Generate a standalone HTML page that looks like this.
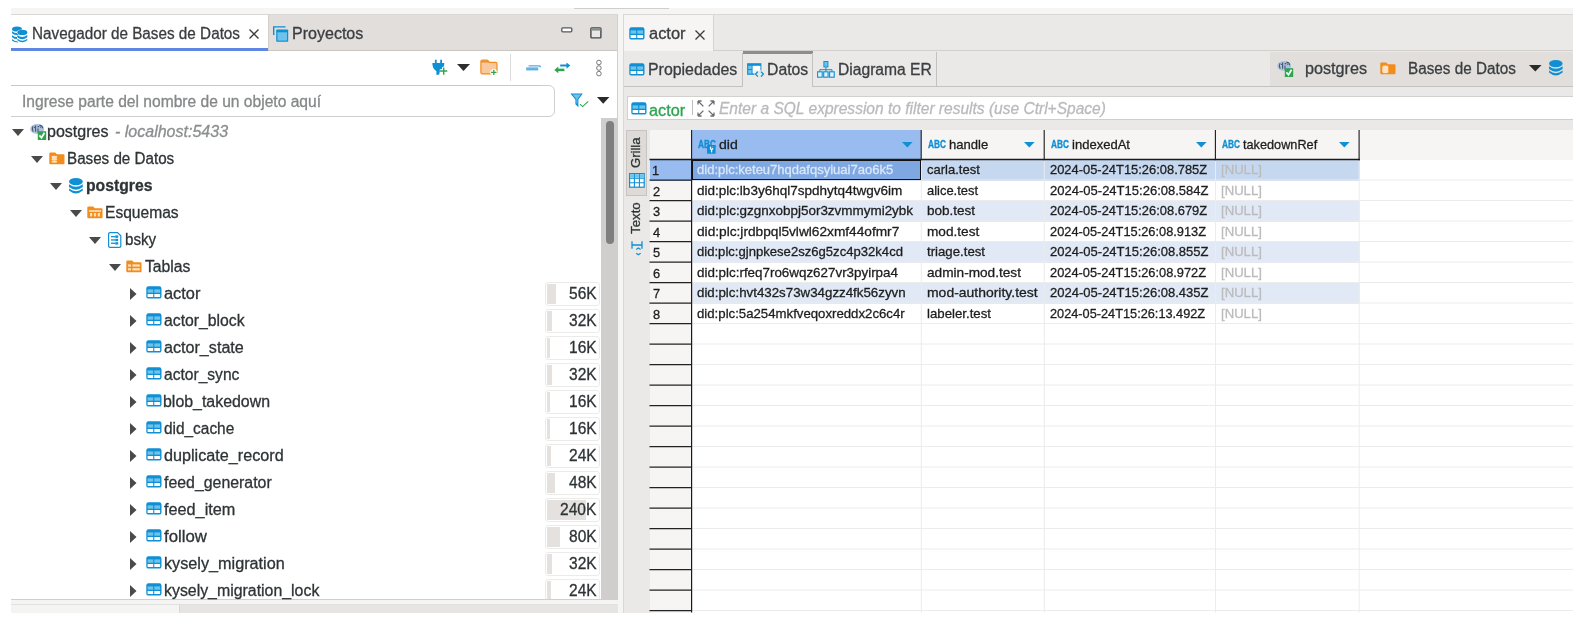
<!DOCTYPE html>
<html lang="es"><head><meta charset="utf-8"><title>DBeaver</title><style>
html,body{margin:0;padding:0;background:#fff}
body{width:1575px;height:624px;position:relative;overflow:hidden;font-family:'Liberation Sans',sans-serif}
#r>div,#r>svg,#r>span{position:absolute}
#r>svg{overflow:visible}
#r{will-change:transform;position:absolute;left:0;top:0;width:1575px;height:624px}
.t{white-space:pre;line-height:1;transform-origin:0 0;-webkit-text-stroke:0.3px currentColor}
.abc{font-size:9px;font-weight:700;color:#0f8fd4;line-height:1;letter-spacing:0.2px;font-family:'Liberation Mono','DejaVu Sans Mono',monospace;transform:scaleX(1.0);transform-origin:0 0}
.vt{font-size:13.5px;color:#2e3436;line-height:1;white-space:pre;transform-origin:0 0;transform:rotate(-90deg) scaleX(0.95)}
</style></head><body><div id="r">
<div style="left:11px;top:8px;width:1562px;height:7px;background:#f5f5f4;"></div>
<div style="left:11px;top:14px;width:1562px;height:1px;background:#d9d6d3;"></div>
<div style="left:11px;top:15px;width:607px;height:35.5px;background:#e1dedb;"></div>
<div style="left:11px;top:50px;width:607px;height:1px;background:#c9c6c3;"></div>
<div style="left:11px;top:15px;width:257px;height:33px;background:#ffffff;"></div>
<div style="left:11px;top:48px;width:257px;height:3px;background:#5f86e3;"></div>
<div style="left:268px;top:15px;width:1px;height:35px;background:#d2cfcc;"></div>
<div style="left:11px;top:51px;width:606px;height:548px;background:#ffffff;"></div>
<div style="left:617px;top:15px;width:1px;height:585px;background:#d2cfcc;"></div>
<div style="left:618px;top:8px;width:4.5px;height:605px;background:#f5f5f4;"></div>
<div style="left:574px;top:8px;width:95px;height:1px;background:#cfcfcf;"></div>
<div style="left:510px;top:54px;width:1px;height:27px;background:#dcdcdc;"></div>
<div style="left:5px;top:84.5px;width:550px;height:32px;border:1px solid #cfcfcf;border-radius:6px;background:#fff;box-sizing:border-box"></div>
<div style="left:11px;top:85px;width:530px;height:1px;background:#c9c9c9;"></div>
<div style="left:5px;top:80px;width:6px;height:40px;background:#ffffff;"></div>
<div style="left:601px;top:117.5px;width:16.5px;height:482px;background:#cfcecd;"></div>
<div style="left:605.5px;top:121px;width:8.5px;height:123px;background:#7f7f7f;border-radius:4.5px"></div>
<div style="left:622.5px;top:15px;width:951px;height:36px;background:#eae9e7;"></div>
<div style="left:623px;top:15px;width:90px;height:35.5px;background:#f6f5f4;"></div>
<div style="left:713px;top:15px;width:1px;height:36px;background:#d5d3d0;"></div>
<div style="left:713px;top:50px;width:860px;height:1px;background:#d2d0cd;"></div>
<div style="left:622.5px;top:51px;width:951px;height:35px;background:#eae9e7;"></div>
<div style="left:1270px;top:52px;width:303px;height:34px;background:#e1dedb;"></div>
<div style="left:622.5px;top:86px;width:951px;height:1px;background:#c4c2bf;"></div>
<div style="left:622.5px;top:87px;width:951px;height:43px;background:#eae9e7;"></div>
<div style="left:742.5px;top:51px;width:70px;height:36px;background:#eae9e7;"></div>
<div style="left:742.5px;top:51px;width:70px;height:2.5px;background:#8b8e8f;"></div>
<div style="left:742px;top:53px;width:1px;height:33.5px;background:#c4c2bf;"></div>
<div style="left:812px;top:53px;width:1px;height:33.5px;background:#c4c2bf;"></div>
<div style="left:935.5px;top:52px;width:1px;height:34px;background:#c4c2bf;"></div>
<div style="left:626.5px;top:96px;width:947px;height:1px;background:#d3d1ce;"></div>
<div style="left:626.5px;top:96px;width:1px;height:24px;background:#d3d1ce;"></div>
<div style="left:627.5px;top:97px;width:946px;height:22px;background:#ffffff;"></div>
<div style="left:626.5px;top:119px;width:947px;height:1px;background:#d0cecb;"></div>
<div style="left:692.3px;top:100px;width:1px;height:15px;background:#bdbdbd;"></div>
<div style="left:622.5px;top:120px;width:951px;height:492.5px;background:#eae9e7;"></div>
<div style="left:622.5px;top:15px;width:1px;height:598px;background:#dad8d5;"></div>
<div style="left:625.5px;top:130px;width:21.5px;height:65.5px;background:#dddad7;border:1px solid #c6c3c0;box-sizing:border-box"></div>
<div style="left:649.5px;top:130px;width:923.5px;height:482.5px;background:#ffffff;"></div>
<div style="left:649.5px;top:130px;width:923.5px;height:29.5px;background:#f6f5f4;"></div>
<div style="left:649.5px;top:130px;width:42.5px;height:482.5px;background:#f6f5f4;"></div>
<div style="left:692px;top:130px;width:229px;height:29.5px;background:#99bcf0;"></div>
<div style="left:692px;top:160.0px;width:667.5px;height:20.5px;background:#c6d8f0;"></div>
<div style="left:649.5px;top:160.0px;width:42.5px;height:20.5px;background:#99bcf0;"></div>
<div style="left:692px;top:201.0px;width:667.5px;height:20.5px;background:#e0e9f5;"></div>
<div style="left:692px;top:242.0px;width:667.5px;height:20.5px;background:#e0e9f5;"></div>
<div style="left:692px;top:283.0px;width:667.5px;height:20.5px;background:#e0e9f5;"></div>
<svg style="left:0;top:0" width="1575" height="613" viewBox="0 0 1575 613"><path d="M692 180.0H1573" stroke="#ececec" stroke-width="1"/><path d="M692 200.5H1573" stroke="#ececec" stroke-width="1"/><path d="M692 221.0H1573" stroke="#ececec" stroke-width="1"/><path d="M692 241.5H1573" stroke="#ececec" stroke-width="1"/><path d="M692 262.0H1573" stroke="#ececec" stroke-width="1"/><path d="M692 282.5H1573" stroke="#ececec" stroke-width="1"/><path d="M692 303.0H1573" stroke="#ececec" stroke-width="1"/><path d="M692 323.5H1573" stroke="#ececec" stroke-width="1"/><path d="M692 344.0H1573" stroke="#ececec" stroke-width="1"/><path d="M692 364.5H1573" stroke="#ececec" stroke-width="1"/><path d="M692 385.0H1573" stroke="#ececec" stroke-width="1"/><path d="M692 405.5H1573" stroke="#ececec" stroke-width="1"/><path d="M692 426.0H1573" stroke="#ececec" stroke-width="1"/><path d="M692 446.5H1573" stroke="#ececec" stroke-width="1"/><path d="M692 467.0H1573" stroke="#ececec" stroke-width="1"/><path d="M692 487.5H1573" stroke="#ececec" stroke-width="1"/><path d="M692 508.0H1573" stroke="#ececec" stroke-width="1"/><path d="M692 528.5H1573" stroke="#ececec" stroke-width="1"/><path d="M692 549.0H1573" stroke="#ececec" stroke-width="1"/><path d="M692 569.5H1573" stroke="#ececec" stroke-width="1"/><path d="M692 590.0H1573" stroke="#ececec" stroke-width="1"/><path d="M692 610.5H1573" stroke="#ececec" stroke-width="1"/><path d="M921.3000000000001 159.5V612.5" stroke="#ececec" stroke-width="1"/><path d="M1044.3 159.5V612.5" stroke="#ececec" stroke-width="1"/><path d="M1215.5 159.5V612.5" stroke="#ececec" stroke-width="1"/><path d="M1359.2 159.5V612.5" stroke="#ececec" stroke-width="1"/><path d="M649.5 159.5H1360" stroke="#1a1a1a" stroke-width="1.4"/><path d="M691.6 130V160.2" stroke="#1a1a1a" stroke-width="1.1"/><path d="M921.2 130V160.2" stroke="#1a1a1a" stroke-width="1.1"/><path d="M1044.1999999999998 130V160.2" stroke="#1a1a1a" stroke-width="1.1"/><path d="M1215.3999999999999 130V160.2" stroke="#1a1a1a" stroke-width="1.1"/><path d="M1359.1 130V160.2" stroke="#1a1a1a" stroke-width="1.1"/><path d="M691.6 159.5V612.5" stroke="#1a1a1a" stroke-width="1.2"/><path d="M649.5 180.0H691.6" stroke="#222" stroke-width="1.25"/><path d="M649.5 200.5H691.6" stroke="#222" stroke-width="1.25"/><path d="M649.5 221.0H691.6" stroke="#222" stroke-width="1.25"/><path d="M649.5 241.5H691.6" stroke="#222" stroke-width="1.25"/><path d="M649.5 262.0H691.6" stroke="#222" stroke-width="1.25"/><path d="M649.5 282.5H691.6" stroke="#222" stroke-width="1.25"/><path d="M649.5 303.0H691.6" stroke="#222" stroke-width="1.25"/><path d="M649.5 323.5H691.6" stroke="#222" stroke-width="1.25"/><path d="M649.5 344.0H691.6" stroke="#222" stroke-width="1.25"/><path d="M649.5 364.5H691.6" stroke="#222" stroke-width="1.25"/><path d="M649.5 385.0H691.6" stroke="#222" stroke-width="1.25"/><path d="M649.5 405.5H691.6" stroke="#222" stroke-width="1.25"/><path d="M649.5 426.0H691.6" stroke="#222" stroke-width="1.25"/><path d="M649.5 446.5H691.6" stroke="#222" stroke-width="1.25"/><path d="M649.5 467.0H691.6" stroke="#222" stroke-width="1.25"/><path d="M649.5 487.5H691.6" stroke="#222" stroke-width="1.25"/><path d="M649.5 508.0H691.6" stroke="#222" stroke-width="1.25"/><path d="M649.5 528.5H691.6" stroke="#222" stroke-width="1.25"/><path d="M649.5 549.0H691.6" stroke="#222" stroke-width="1.25"/><path d="M649.5 569.5H691.6" stroke="#222" stroke-width="1.25"/><path d="M649.5 590.0H691.6" stroke="#222" stroke-width="1.25"/><path d="M649.5 610.5H691.6" stroke="#222" stroke-width="1.25"/></svg>
<div style="left:692px;top:160px;width:229px;height:19.5px;background:#7fa8e3;border:1.5px solid #111;box-sizing:border-box"></div>
<div style="left:0px;top:612.5px;width:1575px;height:12px;background:#ffffff;"></div>
<div style="left:1573px;top:0px;width:2px;height:624px;background:#ffffff;"></div>
<svg style="left:12px;top:25.5px" width="16" height="17" viewBox="0 0 16 17"><ellipse cx="5" cy="3" rx="5" ry="2.6" fill="#0f8fd4"/><path d="M0 5.2Q5 9 10 5.2V7.2Q5 11 0 7.2Z M0 9.2Q5 13 10 9.2V11.2Q5 15 0 11.2Z M0 13Q3 15.5 6 15.5V16.5Q2 16.5 0 14.6Z" fill="#0f8fd4"/><ellipse cx="10.3" cy="6.6" rx="5.6" ry="3.2" fill="#fff"/><ellipse cx="10.3" cy="6.4" rx="5" ry="2.7" fill="#0f8fd4"/><path d="M5 9.2h10.6v6H5z" fill="#fff"/><path d="M5.3 9Q10.3 13 15.3 9V11.2Q10.3 15.2 5.3 11.2Z M5.3 12.8Q10.3 16.8 15.3 12.8V14.2Q10.3 18.2 5.3 14.2Z" fill="#0f8fd4"/></svg>
<svg style="left:249px;top:29.2px" width="10" height="10" viewBox="0 0 10 10"><path d="M0.5 0.5L9.5 9.5M9.5 0.5L0.5 9.5" stroke="#3a3a3a" stroke-width="1.3" fill="none"/></svg>
<svg style="left:273px;top:25.5px" width="16" height="17" viewBox="0 0 16 17"><path d="M0.7 9V0.9H12.5" stroke="#0f8fd4" stroke-width="1.4" fill="none"/><rect x="3.2" y="3.5" width="12" height="12.3" rx="0.8" fill="#0f8fd4"/><rect x="4.4" y="6.3" width="9.6" height="8.3" fill="#6cc4ec"/></svg>
<svg style="left:560.5px;top:26.5px" width="12" height="6" viewBox="0 0 12 6"><rect x="0.8" y="0.8" width="10" height="4" rx="1" fill="#fff" stroke="#55585a" stroke-width="1.3"/></svg>
<svg style="left:589.5px;top:26.5px" width="12" height="12" viewBox="0 0 12 12"><rect x="0.9" y="0.9" width="10" height="10" rx="0.8" fill="#e9e8e6" stroke="#44474a" stroke-width="1.4"/><rect x="1.2" y="1.2" width="9.4" height="2.4" fill="#8a8c8e"/></svg>
<svg style="left:432px;top:59px" width="16" height="16" viewBox="0 0 16 16"><path d="M2.9 0.8h1.8v3.4H2.9zM8.2 0.8h1.8v3.4H8.2z" fill="#0f8fd4"/><path d="M0.4 4.1H12.3Q12.6 8.2 8.4 11.2L7 15.8H4.4V12.2Q0 9.4 0.4 4.1Z" fill="#0f8fd4"/><path d="M11.7 8V15.8M7.8 12H15.6" stroke="#fff" stroke-width="3.4"/><path d="M11.7 8.5V15.8M8 12H15.3" stroke="#2ea44f" stroke-width="1.4"/></svg>
<svg style="left:457.2px;top:63.9px" width="13" height="6.9" viewBox="0 0 13 6.9"><path d="M0 0H13L6.5 6.9Z" fill="#2e2e2e"/></svg>
<svg style="left:479.5px;top:58.5px" width="18" height="16" viewBox="0 0 18 16"><path d="M0.9 2.4Q0.9 1 2.3 1H6.8Q7.6 1 8.2 1.8L9.4 3.4H15.6Q17 3.4 17 4.8V13.6Q17 14.9 15.6 14.9H2.3Q0.9 14.9 0.9 13.6Z" fill="#f9c99d" stroke="#f28c1c" stroke-width="1.2"/><path d="M1.2 1.6H7.6L9 3.6H1.2Z" fill="#f28c1c"/><path d="M13.8 10V16.4M10.4 13.4H17.2" stroke="#fff" stroke-width="3.6"/><path d="M13.8 10.7V16.1M11.1 13.4H16.5" stroke="#2ea44f" stroke-width="1.3"/></svg>
<svg style="left:526px;top:64.5px" width="15" height="6" viewBox="0 0 15 6"><path d="M2.6 0.9H14.2V2.4" stroke="#0f8fd4" stroke-width="0.9" fill="none"/><rect x="0.2" y="2.8" width="12" height="2.2" fill="#9ec4ee"/><path d="M0.2 3H12.2M0.2 4.9H12.2" stroke="#0f8fd4" stroke-width="0.7"/></svg>
<svg style="left:553.5px;top:61.5px" width="17" height="12" viewBox="0 0 17 12"><path d="M6.2 3.5H13" stroke="#0f8fd4" stroke-width="2"/><path d="M12.5 0.4L16.3 3.5L12.5 6.8Z" fill="#0f8fd4"/><path d="M4 7.9H10.4" stroke="#2ea44f" stroke-width="2.5"/><path d="M4.3 4.5L0.3 7.9L4.3 11.2Z" fill="#2ea44f"/></svg>
<svg style="left:595px;top:58.5px" width="8" height="18" viewBox="0 0 8 18"><circle cx="3.9" cy="3.5" r="2.3" fill="none" stroke="#77797b" stroke-width="1"/><circle cx="3.9" cy="9" r="2.3" fill="none" stroke="#77797b" stroke-width="1"/><circle cx="3.9" cy="14.6" r="2.3" fill="none" stroke="#77797b" stroke-width="1"/></svg>
<svg style="left:569.5px;top:93px" width="20" height="15" viewBox="0 0 20 15"><path d="M0.4 0.4H12.8L8.4 6.6V14.2L5.4 11.2V6.6Z" fill="#0f8fd4"/><path d="M2.6 1.6H10.8L7.4 6V11L6.4 10V6Z" fill="#6cc4ec"/><path d="M10 11.2L12.6 13.6L18.2 8.4" fill="none" stroke="#2ea44f" stroke-width="1.1"/></svg>
<svg style="left:596.8px;top:97.2px" width="12.4" height="6.8" viewBox="0 0 12.4 6.8"><path d="M0 0H12.4L6.2 6.8Z" fill="#2a2a2a"/></svg>
<svg style="left:11.5px;top:128.5px" width="12" height="7" viewBox="0 0 12 7"><path d="M0 0H12L6.0 7Z" fill="#4a4a4a"/></svg>
<svg style="left:30px;top:123.80000000000001px" width="17" height="16" viewBox="0 0 17 16"><ellipse cx="7.2" cy="5" rx="7" ry="5" fill="#aec1db"/><path d="M3 2.2Q1.6 5 3.2 7.6M5.6 1.6V7.8M7.6 2.6H9.2M9.4 1.4Q12.4 1 12.6 4.2M8 4.4V8.4" stroke="#34435c" stroke-width="1.1" fill="none" opacity="0.85"/><path d="M4 3.4H5M10 3.2H11.4" stroke="#2c6fc0" stroke-width="1.2"/><rect x="7.8" y="7.2" width="8.4" height="8.8" fill="#2ea44f"/><path d="M9.4 11.4l2.1 2.4 3-5" stroke="#fff" stroke-width="1.7" fill="none"/></svg>
<svg style="left:30.5px;top:155.5px" width="12" height="7" viewBox="0 0 12 7"><path d="M0 0H12L6.0 7Z" fill="#4a4a4a"/></svg>
<svg style="left:48.5px;top:152.20000000000002px" width="16" height="13" viewBox="0 0 16 13"><path d="M0.3 1.6Q0.3 0.4 1.5 0.4H6.2L7.8 2.2H14.5Q15.5 2.2 15.5 3.2V11.3Q15.5 12.3 14.5 12.3H1.3Q0.3 12.3 0.3 11.3Z" fill="#f28c1c"/><ellipse cx="5.3" cy="5" rx="3" ry="1.2" fill="#fde3c3"/><ellipse cx="5.3" cy="7.3" rx="3" ry="1.2" fill="#fde3c3"/><ellipse cx="5.3" cy="9.6" rx="3" ry="1.2" fill="#fde3c3"/></svg>
<svg style="left:50.0px;top:182.5px" width="12" height="7" viewBox="0 0 12 7"><path d="M0 0H12L6.0 7Z" fill="#4a4a4a"/></svg>
<svg style="left:68.5px;top:177.60000000000002px" width="14" height="17" viewBox="0 0 14 17"><ellipse cx="6.9" cy="3.6" rx="6.9" ry="3.6" fill="#0f8fd4"/><path d="M0 6.2 Q6.9 11.5 13.8 6.2 V9 Q6.9 14.3 0 9Z" fill="#0f8fd4"/><path d="M0 10.6 Q6.9 15.9 13.8 10.6 V12.6 Q6.9 18.4 0 12.6Z" fill="#0f8fd4"/></svg>
<svg style="left:69.5px;top:209.5px" width="12" height="7" viewBox="0 0 12 7"><path d="M0 0H12L6.0 7Z" fill="#4a4a4a"/></svg>
<svg style="left:87px;top:206.20000000000002px" width="16" height="13" viewBox="0 0 16 13"><path d="M0.3 1.6Q0.3 0.4 1.5 0.4H6.2L7.8 2.2H14.5Q15.5 2.2 15.5 3.2V11.3Q15.5 12.3 14.5 12.3H1.3Q0.3 12.3 0.3 11.3Z" fill="#f28c1c"/><rect x="2" y="4.2" width="12" height="1.6" fill="#fde3c3"/><rect x="3" y="7" width="2.2" height="3.4" fill="#fde3c3"/><rect x="6.9" y="7" width="2.2" height="3.4" fill="#fde3c3"/><rect x="10.8" y="7" width="2.2" height="3.4" fill="#fde3c3"/></svg>
<svg style="left:89.0px;top:236.5px" width="12" height="7" viewBox="0 0 12 7"><path d="M0 0H12L6.0 7Z" fill="#4a4a4a"/></svg>
<svg style="left:107.6px;top:231.8px" width="14" height="16" viewBox="0 0 14 16"><path d="M2 0.6H9.5L12.8 3.8V14Q12.8 15.4 11.4 15.4H2Q0.6 15.4 0.6 14V2Q0.6 0.6 2 0.6Z" fill="#fff" stroke="#0f8fd4" stroke-width="1.2"/><rect x="3" y="4" width="4" height="1.3" fill="#0f8fd4"/><rect x="3" y="7.3" width="4" height="1.3" fill="#0f8fd4"/><rect x="3" y="10.6" width="4" height="1.3" fill="#0f8fd4"/><rect x="7.2" y="3.4" width="3" height="2.4" fill="#0f8fd4"/><rect x="7.2" y="6.8" width="3" height="2.4" fill="#0f8fd4"/><rect x="7.2" y="10.2" width="3" height="2.4" fill="#0f8fd4"/></svg>
<svg style="left:108.5px;top:263.5px" width="12" height="7" viewBox="0 0 12 7"><path d="M0 0H12L6.0 7Z" fill="#4a4a4a"/></svg>
<svg style="left:126.2px;top:260.2px" width="16" height="13" viewBox="0 0 16 13"><path d="M0.3 1.6Q0.3 0.4 1.5 0.4H6.2L7.8 2.2H14.5Q15.5 2.2 15.5 3.2V11.3Q15.5 12.3 14.5 12.3H1.3Q0.3 12.3 0.3 11.3Z" fill="#f28c1c"/><rect x="2" y="4.4" width="3" height="2.2" fill="#fde3c3"/><rect x="6.4" y="4.4" width="7.4" height="2.2" fill="#fde3c3"/><rect x="2" y="8.2" width="3" height="2.2" fill="#fde3c3"/><rect x="6.4" y="8.2" width="7.4" height="2.2" fill="#fde3c3"/></svg>
<svg style="left:130.4px;top:287.90000000000003px" width="7" height="12" viewBox="0 0 7 12"><path d="M0 0V12L6.5 6.0Z" fill="#4a4a4a"/></svg>
<svg style="left:145.7px;top:286.40000000000003px" width="16" height="13" viewBox="0 0 16 13"><rect x="0.3" y="0.2" width="15.2" height="12.4" rx="2.2" fill="#0f8fd4"/><rect x="1.6" y="3.4" width="5.6" height="3.3" fill="#6cc4ec"/><rect x="8.3" y="3.4" width="5.8" height="3.3" fill="#6cc4ec"/><rect x="1.6" y="8" width="5.6" height="3" fill="#fff"/><rect x="8.3" y="8" width="5.8" height="3" fill="#fff"/></svg>
<div style="left:544.5px;top:281.50px;width:55px;height:24.5px;border:1px solid #ebebea;border-radius:3px;box-sizing:border-box;background:#fff"></div>
<div style="left:547px;top:283.5px;width:9.0px;height:20px;background:#e4e1de;"></div>
<svg style="left:130.4px;top:314.90000000000003px" width="7" height="12" viewBox="0 0 7 12"><path d="M0 0V12L6.5 6.0Z" fill="#4a4a4a"/></svg>
<svg style="left:145.7px;top:313.40000000000003px" width="16" height="13" viewBox="0 0 16 13"><rect x="0.3" y="0.2" width="15.2" height="12.4" rx="2.2" fill="#0f8fd4"/><rect x="1.6" y="3.4" width="5.6" height="3.3" fill="#6cc4ec"/><rect x="8.3" y="3.4" width="5.8" height="3.3" fill="#6cc4ec"/><rect x="1.6" y="8" width="5.6" height="3" fill="#fff"/><rect x="8.3" y="8" width="5.8" height="3" fill="#fff"/></svg>
<div style="left:544.5px;top:308.50px;width:55px;height:24.5px;border:1px solid #ebebea;border-radius:3px;box-sizing:border-box;background:#fff"></div>
<div style="left:547px;top:310.5px;width:5.2px;height:20px;background:#e4e1de;"></div>
<svg style="left:130.4px;top:341.90000000000003px" width="7" height="12" viewBox="0 0 7 12"><path d="M0 0V12L6.5 6.0Z" fill="#4a4a4a"/></svg>
<svg style="left:145.7px;top:340.40000000000003px" width="16" height="13" viewBox="0 0 16 13"><rect x="0.3" y="0.2" width="15.2" height="12.4" rx="2.2" fill="#0f8fd4"/><rect x="1.6" y="3.4" width="5.6" height="3.3" fill="#6cc4ec"/><rect x="8.3" y="3.4" width="5.8" height="3.3" fill="#6cc4ec"/><rect x="1.6" y="8" width="5.6" height="3" fill="#fff"/><rect x="8.3" y="8" width="5.8" height="3" fill="#fff"/></svg>
<div style="left:544.5px;top:335.50px;width:55px;height:24.5px;border:1px solid #ebebea;border-radius:3px;box-sizing:border-box;background:#fff"></div>
<div style="left:547px;top:337.5px;width:2.6px;height:20px;background:#e4e1de;"></div>
<svg style="left:130.4px;top:368.90000000000003px" width="7" height="12" viewBox="0 0 7 12"><path d="M0 0V12L6.5 6.0Z" fill="#4a4a4a"/></svg>
<svg style="left:145.7px;top:367.40000000000003px" width="16" height="13" viewBox="0 0 16 13"><rect x="0.3" y="0.2" width="15.2" height="12.4" rx="2.2" fill="#0f8fd4"/><rect x="1.6" y="3.4" width="5.6" height="3.3" fill="#6cc4ec"/><rect x="8.3" y="3.4" width="5.8" height="3.3" fill="#6cc4ec"/><rect x="1.6" y="8" width="5.6" height="3" fill="#fff"/><rect x="8.3" y="8" width="5.8" height="3" fill="#fff"/></svg>
<div style="left:544.5px;top:362.50px;width:55px;height:24.5px;border:1px solid #ebebea;border-radius:3px;box-sizing:border-box;background:#fff"></div>
<div style="left:547px;top:364.5px;width:5.2px;height:20px;background:#e4e1de;"></div>
<svg style="left:130.4px;top:395.90000000000003px" width="7" height="12" viewBox="0 0 7 12"><path d="M0 0V12L6.5 6.0Z" fill="#4a4a4a"/></svg>
<svg style="left:145.7px;top:394.40000000000003px" width="16" height="13" viewBox="0 0 16 13"><rect x="0.3" y="0.2" width="15.2" height="12.4" rx="2.2" fill="#0f8fd4"/><rect x="1.6" y="3.4" width="5.6" height="3.3" fill="#6cc4ec"/><rect x="8.3" y="3.4" width="5.8" height="3.3" fill="#6cc4ec"/><rect x="1.6" y="8" width="5.6" height="3" fill="#fff"/><rect x="8.3" y="8" width="5.8" height="3" fill="#fff"/></svg>
<div style="left:544.5px;top:389.50px;width:55px;height:24.5px;border:1px solid #ebebea;border-radius:3px;box-sizing:border-box;background:#fff"></div>
<div style="left:547px;top:391.5px;width:2.6px;height:20px;background:#e4e1de;"></div>
<svg style="left:130.4px;top:422.90000000000003px" width="7" height="12" viewBox="0 0 7 12"><path d="M0 0V12L6.5 6.0Z" fill="#4a4a4a"/></svg>
<svg style="left:145.7px;top:421.40000000000003px" width="16" height="13" viewBox="0 0 16 13"><rect x="0.3" y="0.2" width="15.2" height="12.4" rx="2.2" fill="#0f8fd4"/><rect x="1.6" y="3.4" width="5.6" height="3.3" fill="#6cc4ec"/><rect x="8.3" y="3.4" width="5.8" height="3.3" fill="#6cc4ec"/><rect x="1.6" y="8" width="5.6" height="3" fill="#fff"/><rect x="8.3" y="8" width="5.8" height="3" fill="#fff"/></svg>
<div style="left:544.5px;top:416.50px;width:55px;height:24.5px;border:1px solid #ebebea;border-radius:3px;box-sizing:border-box;background:#fff"></div>
<div style="left:547px;top:418.5px;width:2.6px;height:20px;background:#e4e1de;"></div>
<svg style="left:130.4px;top:449.90000000000003px" width="7" height="12" viewBox="0 0 7 12"><path d="M0 0V12L6.5 6.0Z" fill="#4a4a4a"/></svg>
<svg style="left:145.7px;top:448.40000000000003px" width="16" height="13" viewBox="0 0 16 13"><rect x="0.3" y="0.2" width="15.2" height="12.4" rx="2.2" fill="#0f8fd4"/><rect x="1.6" y="3.4" width="5.6" height="3.3" fill="#6cc4ec"/><rect x="8.3" y="3.4" width="5.8" height="3.3" fill="#6cc4ec"/><rect x="1.6" y="8" width="5.6" height="3" fill="#fff"/><rect x="8.3" y="8" width="5.8" height="3" fill="#fff"/></svg>
<div style="left:544.5px;top:443.50px;width:55px;height:24.5px;border:1px solid #ebebea;border-radius:3px;box-sizing:border-box;background:#fff"></div>
<div style="left:547px;top:445.5px;width:3.9px;height:20px;background:#e4e1de;"></div>
<svg style="left:130.4px;top:476.90000000000003px" width="7" height="12" viewBox="0 0 7 12"><path d="M0 0V12L6.5 6.0Z" fill="#4a4a4a"/></svg>
<svg style="left:145.7px;top:475.40000000000003px" width="16" height="13" viewBox="0 0 16 13"><rect x="0.3" y="0.2" width="15.2" height="12.4" rx="2.2" fill="#0f8fd4"/><rect x="1.6" y="3.4" width="5.6" height="3.3" fill="#6cc4ec"/><rect x="8.3" y="3.4" width="5.8" height="3.3" fill="#6cc4ec"/><rect x="1.6" y="8" width="5.6" height="3" fill="#fff"/><rect x="8.3" y="8" width="5.8" height="3" fill="#fff"/></svg>
<div style="left:544.5px;top:470.50px;width:55px;height:24.5px;border:1px solid #ebebea;border-radius:3px;box-sizing:border-box;background:#fff"></div>
<div style="left:547px;top:472.5px;width:7.7px;height:20px;background:#e4e1de;"></div>
<svg style="left:130.4px;top:503.9px" width="7" height="12" viewBox="0 0 7 12"><path d="M0 0V12L6.5 6.0Z" fill="#4a4a4a"/></svg>
<svg style="left:145.7px;top:502.4px" width="16" height="13" viewBox="0 0 16 13"><rect x="0.3" y="0.2" width="15.2" height="12.4" rx="2.2" fill="#0f8fd4"/><rect x="1.6" y="3.4" width="5.6" height="3.3" fill="#6cc4ec"/><rect x="8.3" y="3.4" width="5.8" height="3.3" fill="#6cc4ec"/><rect x="1.6" y="8" width="5.6" height="3" fill="#fff"/><rect x="8.3" y="8" width="5.8" height="3" fill="#fff"/></svg>
<div style="left:544.5px;top:497.50px;width:55px;height:24.5px;border:1px solid #ebebea;border-radius:3px;box-sizing:border-box;background:#fff"></div>
<div style="left:547px;top:499.49999999999994px;width:38.6px;height:20px;background:#e4e1de;"></div>
<svg style="left:130.4px;top:530.9px" width="7" height="12" viewBox="0 0 7 12"><path d="M0 0V12L6.5 6.0Z" fill="#4a4a4a"/></svg>
<svg style="left:145.7px;top:529.4px" width="16" height="13" viewBox="0 0 16 13"><rect x="0.3" y="0.2" width="15.2" height="12.4" rx="2.2" fill="#0f8fd4"/><rect x="1.6" y="3.4" width="5.6" height="3.3" fill="#6cc4ec"/><rect x="8.3" y="3.4" width="5.8" height="3.3" fill="#6cc4ec"/><rect x="1.6" y="8" width="5.6" height="3" fill="#fff"/><rect x="8.3" y="8" width="5.8" height="3" fill="#fff"/></svg>
<div style="left:544.5px;top:524.50px;width:55px;height:24.5px;border:1px solid #ebebea;border-radius:3px;box-sizing:border-box;background:#fff"></div>
<div style="left:547px;top:526.5px;width:12.9px;height:20px;background:#e4e1de;"></div>
<svg style="left:130.4px;top:557.9px" width="7" height="12" viewBox="0 0 7 12"><path d="M0 0V12L6.5 6.0Z" fill="#4a4a4a"/></svg>
<svg style="left:145.7px;top:556.4px" width="16" height="13" viewBox="0 0 16 13"><rect x="0.3" y="0.2" width="15.2" height="12.4" rx="2.2" fill="#0f8fd4"/><rect x="1.6" y="3.4" width="5.6" height="3.3" fill="#6cc4ec"/><rect x="8.3" y="3.4" width="5.8" height="3.3" fill="#6cc4ec"/><rect x="1.6" y="8" width="5.6" height="3" fill="#fff"/><rect x="8.3" y="8" width="5.8" height="3" fill="#fff"/></svg>
<div style="left:544.5px;top:551.50px;width:55px;height:24.5px;border:1px solid #ebebea;border-radius:3px;box-sizing:border-box;background:#fff"></div>
<div style="left:547px;top:553.5px;width:5.2px;height:20px;background:#e4e1de;"></div>
<svg style="left:130.4px;top:584.9px" width="7" height="12" viewBox="0 0 7 12"><path d="M0 0V12L6.5 6.0Z" fill="#4a4a4a"/></svg>
<svg style="left:145.7px;top:583.4px" width="16" height="13" viewBox="0 0 16 13"><rect x="0.3" y="0.2" width="15.2" height="12.4" rx="2.2" fill="#0f8fd4"/><rect x="1.6" y="3.4" width="5.6" height="3.3" fill="#6cc4ec"/><rect x="8.3" y="3.4" width="5.8" height="3.3" fill="#6cc4ec"/><rect x="1.6" y="8" width="5.6" height="3" fill="#fff"/><rect x="8.3" y="8" width="5.8" height="3" fill="#fff"/></svg>
<div style="left:544.5px;top:578.50px;width:55px;height:24.5px;border:1px solid #ebebea;border-radius:3px;box-sizing:border-box;background:#fff"></div>
<div style="left:547px;top:580.5px;width:3.9px;height:20px;background:#e4e1de;"></div>
<div style="left:11px;top:599.5px;width:607px;height:5px;background:#f4f4f3;"></div>
<div style="left:11px;top:599px;width:607px;height:1px;background:#cfcfcf;"></div>
<div style="left:11px;top:604.5px;width:607px;height:8.2px;background:#e7e5e3;"></div>
<div style="left:11px;top:604.5px;width:168.5px;height:8.2px;background:#f4f4f3;"></div>
<div style="left:179px;top:604.5px;width:1px;height:8.2px;background:#d9d7d4;"></div>
<div style="left:11px;top:604px;width:607px;height:1px;background:#e2e1df;"></div>
<svg style="left:628.5px;top:27px" width="16" height="13" viewBox="0 0 16 13"><rect x="0.3" y="0.2" width="15.2" height="12.4" rx="2.2" fill="#0f8fd4"/><rect x="1.6" y="3.4" width="5.6" height="3.3" fill="#6cc4ec"/><rect x="8.3" y="3.4" width="5.8" height="3.3" fill="#6cc4ec"/><rect x="1.6" y="8" width="5.6" height="3" fill="#fff"/><rect x="8.3" y="8" width="5.8" height="3" fill="#fff"/></svg>
<svg style="left:694.5px;top:29.5px" width="10" height="10" viewBox="0 0 10 10"><path d="M0.5 0.5L9.5 9.5M9.5 0.5L0.5 9.5" stroke="#3a3a3a" stroke-width="1.3" fill="none"/></svg>
<svg style="left:628.5px;top:62.8px" width="16" height="13" viewBox="0 0 16 13"><rect x="0.3" y="0.2" width="15.2" height="12.4" rx="2.2" fill="#0f8fd4"/><rect x="1.6" y="3.4" width="5.6" height="3.3" fill="#6cc4ec"/><rect x="8.3" y="3.4" width="5.8" height="3.3" fill="#6cc4ec"/><rect x="1.6" y="8" width="5.6" height="3" fill="#fff"/><rect x="8.3" y="8" width="5.8" height="3" fill="#fff"/></svg>
<svg style="left:747px;top:63px" width="17" height="15" viewBox="0 0 17 15"><rect x="0.1" y="0.2" width="14.3" height="11.6" fill="#0f8fd4"/><rect x="5.6" y="2.8" width="7.8" height="7.6" fill="#fff"/><rect x="1.2" y="2.8" width="3.4" height="3.2" fill="#6cc4ec"/><rect x="1.2" y="7" width="3.4" height="3.6" fill="#6cc4ec"/><path d="M7.4 7.4h9.6v7.6H7.4z" fill="#eae9e7"/><path d="M10.9 8.6L8.6 11.1L10.9 13.6M14 8.6L16.3 11.1L14 13.6" fill="none" stroke="#0f8fd4" stroke-width="1.4"/></svg>
<svg style="left:817px;top:61px" width="18" height="17" viewBox="0 0 18 17"><rect x="6.9" y="0.5" width="4" height="5.4" fill="#6cc4ec" stroke="#0f8fd4" stroke-width="1"/><path d="M8.9 6V9M2.8 11V8.7H15V11M8.9 8.7V11" fill="none" stroke="#0f8fd4" stroke-width="1"/><rect x="0.6" y="10.8" width="4.6" height="5.4" fill="#e4f2fb" stroke="#0f8fd4" stroke-width="1.1"/><rect x="6.7" y="10.8" width="4.4" height="5.4" fill="#e4f2fb" stroke="#0f8fd4" stroke-width="1.1"/><rect x="12.6" y="10.8" width="4.6" height="5.4" fill="#e4f2fb" stroke="#0f8fd4" stroke-width="1.1"/></svg>
<svg style="left:1277px;top:61px" width="17" height="16" viewBox="0 0 17 16"><ellipse cx="7.2" cy="5" rx="7" ry="5" fill="#aec1db"/><path d="M3 2.2Q1.6 5 3.2 7.6M5.6 1.6V7.8M7.6 2.6H9.2M9.4 1.4Q12.4 1 12.6 4.2M8 4.4V8.4" stroke="#34435c" stroke-width="1.1" fill="none" opacity="0.85"/><path d="M4 3.4H5M10 3.2H11.4" stroke="#2c6fc0" stroke-width="1.2"/><rect x="7.8" y="7.2" width="8.4" height="8.8" fill="#2ea44f"/><path d="M9.4 11.4l2.1 2.4 3-5" stroke="#fff" stroke-width="1.7" fill="none"/></svg>
<svg style="left:1380px;top:62px" width="16" height="13" viewBox="0 0 16 13"><path d="M0.3 1.6Q0.3 0.4 1.5 0.4H6.2L7.8 2.2H14.5Q15.5 2.2 15.5 3.2V11.3Q15.5 12.3 14.5 12.3H1.3Q0.3 12.3 0.3 11.3Z" fill="#f28c1c"/><ellipse cx="5.3" cy="5" rx="3" ry="1.4" fill="#fde3c3"/><rect x="2.3" y="5" width="6" height="5" fill="#fde3c3"/><ellipse cx="5.3" cy="10" rx="3" ry="1.2" fill="#fde3c3"/></svg>
<svg style="left:1529px;top:65px" width="12.6" height="6.6" viewBox="0 0 12.6 6.6"><path d="M0 0H12.6L6.3 6.6Z" fill="#2a2a2a"/></svg>
<svg style="left:1548.6px;top:60.4px" width="14" height="17" viewBox="0 0 14 17"><ellipse cx="6.8" cy="3.6" rx="6.8" ry="3.6" fill="#0f8fd4"/><path d="M0 6.2 Q6.8 11.5 13.6 6.2 V9 Q6.8 14.3 0 9Z" fill="#0f8fd4"/><path d="M0 10.6 Q6.8 15.9 13.6 10.6 V12.6 Q6.8 18.4 0 12.6Z" fill="#0f8fd4"/></svg>
<svg style="left:630.6px;top:101.6px" width="16" height="13" viewBox="0 0 16 13"><rect x="0.3" y="0.2" width="15.2" height="12.4" rx="2.2" fill="#0f8fd4"/><rect x="1.6" y="3.4" width="5.6" height="3.3" fill="#6cc4ec"/><rect x="8.3" y="3.4" width="5.8" height="3.3" fill="#6cc4ec"/><rect x="1.6" y="8" width="5.6" height="3" fill="#fff"/><rect x="8.3" y="8" width="5.8" height="3" fill="#fff"/></svg>
<svg style="left:697px;top:99.5px" width="18" height="17" viewBox="0 0 18 17"><path d="M1 1L6.4 6.4M1 1H4.6M1 1V4.6 M17 1L11.6 6.4M17 1H13.4M17 1V4.6 M1 16L6.4 10.6M1 16H4.6M1 16V12.4 M17 16L11.6 10.6M17 16H13.4M17 16V12.4" stroke="#6a6d70" stroke-width="1.3" fill="none"/></svg>
<svg style="left:707.4px;top:145px" width="9" height="9" viewBox="0 0 9 9"><rect x="0" y="0" width="8.6" height="8.7" rx="0.6" fill="#0f8fd4"/><circle cx="4.6" cy="3" r="1.9" fill="#fff"/><circle cx="4.6" cy="3" r="0.7" fill="#0f8fd4"/><path d="M4.6 4.6V7.4" stroke="#fff" stroke-width="1.3"/></svg>
<svg style="left:901.5px;top:141.5px" width="11" height="6" viewBox="0 0 11 6"><path d="M0 0H10.6L5.3 5.6Z" fill="#0f8fd4"/></svg>
<svg style="left:1024px;top:141.5px" width="11" height="6" viewBox="0 0 11 6"><path d="M0 0H10.6L5.3 5.6Z" fill="#0f8fd4"/></svg>
<svg style="left:1195.5px;top:141.5px" width="11" height="6" viewBox="0 0 11 6"><path d="M0 0H10.6L5.3 5.6Z" fill="#0f8fd4"/></svg>
<svg style="left:1338.5px;top:141.5px" width="11" height="6" viewBox="0 0 11 6"><path d="M0 0H10.6L5.3 5.6Z" fill="#0f8fd4"/></svg>
<svg style="left:628.5px;top:172.8px" width="16" height="15" viewBox="0 0 16 15"><rect x="0.6" y="0.6" width="14.6" height="13.6" fill="#fff" stroke="#0f8fd4" stroke-width="1.2"/><path d="M5.4 0.6V14.2M10.4 0.6V14.2M0.6 5.2H15.2M0.6 9.8H15.2" stroke="#0f8fd4" stroke-width="1.1"/><rect x="1.2" y="1.2" width="3.8" height="3.6" fill="#6cc4ec"/><rect x="5.9" y="1.2" width="4" height="3.6" fill="#6cc4ec"/><rect x="10.9" y="1.2" width="3.8" height="3.6" fill="#6cc4ec"/></svg>
<svg style="left:630.5px;top:240px" width="12" height="17" viewBox="0 0 12 17"><path d="M1 1.2V8.8M11 1.2V8.8M1 5H11" stroke="#0f8fd4" stroke-width="1.3" fill="none"/><path d="M5.2 9.6L7.4 8L9.6 9.6M5.2 13.2L7.4 14.8L9.6 13.2" stroke="#0f8fd4" stroke-width="1.2" fill="none"/></svg>
<span class="t" style="left:47.47px;top:124.16px;font-size:16px;color:#2e3436;transform:scaleX(1.0022)">postgres</span>
<span class="t" style="left:66.65px;top:151.16px;font-size:16px;color:#2e3436;transform:scaleX(0.9490)">Bases de Datos</span>
<span class="t" style="left:86.26px;top:178.16px;font-size:16px;color:#2e3436;transform:scaleX(0.9823);font-weight:700">postgres</span>
<span class="t" style="left:105.42px;top:205.16px;font-size:16px;color:#2e3436;transform:scaleX(0.9742)">Esquemas</span>
<span class="t" style="left:125.12px;top:232.16px;font-size:16px;color:#2e3436;transform:scaleX(0.9484)">bsky</span>
<span class="t" style="left:145.15px;top:259.16px;font-size:16px;color:#2e3436;transform:scaleX(0.9821)">Tablas</span>
<span class="t" style="left:115.38px;top:124.16px;font-size:16px;color:#8b8e8f;transform:scaleX(1.0008);font-style:italic">- localhost:5433</span>
<span class="t" style="left:163.81px;top:286.16px;font-size:16px;color:#2e3436;transform:scaleX(1.0222)">actor</span>
<span class="t" style="left:568.76px;top:286.16px;font-size:16px;color:#2e3436;transform:scaleX(0.9700)">56K</span>
<span class="t" style="left:163.83px;top:313.16px;font-size:16px;color:#2e3436;transform:scaleX(0.9856)">actor_block</span>
<span class="t" style="left:568.76px;top:313.16px;font-size:16px;color:#2e3436;transform:scaleX(0.9700)">32K</span>
<span class="t" style="left:163.81px;top:340.16px;font-size:16px;color:#2e3436;transform:scaleX(1.0082)">actor_state</span>
<span class="t" style="left:568.76px;top:340.16px;font-size:16px;color:#2e3436;transform:scaleX(0.9700)">16K</span>
<span class="t" style="left:163.84px;top:367.16px;font-size:16px;color:#2e3436;transform:scaleX(0.9741)">actor_sync</span>
<span class="t" style="left:568.76px;top:367.16px;font-size:16px;color:#2e3436;transform:scaleX(0.9700)">32K</span>
<span class="t" style="left:163.47px;top:394.16px;font-size:16px;color:#2e3436;transform:scaleX(0.9946)">blob_takedown</span>
<span class="t" style="left:568.76px;top:394.16px;font-size:16px;color:#2e3436;transform:scaleX(0.9700)">16K</span>
<span class="t" style="left:163.85px;top:421.16px;font-size:16px;color:#2e3436;transform:scaleX(0.9627)">did_cache</span>
<span class="t" style="left:568.76px;top:421.16px;font-size:16px;color:#2e3436;transform:scaleX(0.9700)">16K</span>
<span class="t" style="left:163.82px;top:448.16px;font-size:16px;color:#2e3436;transform:scaleX(1.0121)">duplicate_record</span>
<span class="t" style="left:568.76px;top:448.16px;font-size:16px;color:#2e3436;transform:scaleX(0.9700)">24K</span>
<span class="t" style="left:164.28px;top:475.16px;font-size:16px;color:#2e3436;transform:scaleX(0.9922)">feed_generator</span>
<span class="t" style="left:568.76px;top:475.16px;font-size:16px;color:#2e3436;transform:scaleX(0.9700)">48K</span>
<span class="t" style="left:164.27px;top:502.16px;font-size:16px;color:#2e3436;transform:scaleX(1.0147)">feed_item</span>
<span class="t" style="left:560.12px;top:502.16px;font-size:16px;color:#2e3436;transform:scaleX(0.9700)">240K</span>
<span class="t" style="left:164.26px;top:529.16px;font-size:16px;color:#2e3436;transform:scaleX(1.0487)">follow</span>
<span class="t" style="left:568.76px;top:529.16px;font-size:16px;color:#2e3436;transform:scaleX(0.9700)">80K</span>
<span class="t" style="left:163.91px;top:556.16px;font-size:16px;color:#2e3436;transform:scaleX(1.0133)">kysely_migration</span>
<span class="t" style="left:568.76px;top:556.16px;font-size:16px;color:#2e3436;transform:scaleX(0.9700)">32K</span>
<span class="t" style="left:163.93px;top:583.16px;font-size:16px;color:#2e3436;transform:scaleX(0.9925)">kysely_migration_lock</span>
<span class="t" style="left:568.76px;top:583.16px;font-size:16px;color:#2e3436;transform:scaleX(0.9700)">24K</span>
<span class="t" style="left:698.19px;top:140.34px;font-size:10px;color:#0f8fd4;transform:scaleX(0.8322);font-weight:700">ABC</span>
<span class="t" style="left:927.79px;top:140.34px;font-size:10px;color:#0f8fd4;transform:scaleX(0.8322);font-weight:700">ABC</span>
<span class="t" style="left:1050.79px;top:140.34px;font-size:10px;color:#0f8fd4;transform:scaleX(0.8322);font-weight:700">ABC</span>
<span class="t" style="left:1222.19px;top:140.34px;font-size:10px;color:#0f8fd4;transform:scaleX(0.8322);font-weight:700">ABC</span>
<span class="t" style="left:719.31px;top:138.47px;font-size:13.5px;color:#1d1d1d;transform:scaleX(1.0435)">did</span>
<span class="t" style="left:948.69px;top:138.47px;font-size:13.5px;color:#1d1d1d;transform:scaleX(0.9690)">handle</span>
<span class="t" style="left:1071.63px;top:138.47px;font-size:13.5px;color:#1d1d1d;transform:scaleX(0.9654)">indexedAt</span>
<span class="t" style="left:1243.31px;top:138.47px;font-size:13.5px;color:#1d1d1d;transform:scaleX(0.9411)">takedownRef</span>
<span class="t" style="left:628.57px;top:167.66px;font-size:13.5px;color:#2e3436;transform:rotate(-90deg) scaleX(0.9696)">Grilla</span>
<span class="t" style="left:628.57px;top:234.30px;font-size:13.5px;color:#2e3436;transform:rotate(-90deg) scaleX(0.9837)">Texto</span>
<span class="t" style="left:652.32px;top:164.27px;font-size:13.5px;color:#1d1d1d;transform:scaleX(0.9500)">1</span>
<span class="t" style="left:697.45px;top:163.17px;font-size:13.5px;color:#dbe7f8;transform:scaleX(0.9645)">did:plc:keteu7hqdafqsyiuai7ao6k5</span>
<span class="t" style="left:927.05px;top:163.17px;font-size:13.5px;color:#1d1d1d;transform:scaleX(0.9629)">carla.test</span>
<span class="t" style="left:1049.75px;top:163.17px;font-size:13.5px;color:#1d1d1d;transform:scaleX(0.9561)">2024-05-24T15:26:08.785Z</span>
<span class="t" style="left:1221.26px;top:163.17px;font-size:13.5px;color:#bbbbbb;transform:scaleX(0.9724)">[NULL]</span>
<span class="t" style="left:652.65px;top:184.77px;font-size:13.5px;color:#1d1d1d;transform:scaleX(0.9500)">2</span>
<span class="t" style="left:697.43px;top:183.67px;font-size:13.5px;color:#1d1d1d;transform:scaleX(1.0019)">did:plc:lb3y6hql7spdhytq4twgv6im</span>
<span class="t" style="left:927.05px;top:183.67px;font-size:13.5px;color:#1d1d1d;transform:scaleX(0.9580)">alice.test</span>
<span class="t" style="left:1049.75px;top:183.67px;font-size:13.5px;color:#1d1d1d;transform:scaleX(0.9646)">2024-05-24T15:26:08.584Z</span>
<span class="t" style="left:1221.26px;top:183.67px;font-size:13.5px;color:#bbbbbb;transform:scaleX(0.9724)">[NULL]</span>
<span class="t" style="left:652.81px;top:205.27px;font-size:13.5px;color:#1d1d1d;transform:scaleX(0.9500)">3</span>
<span class="t" style="left:697.44px;top:204.17px;font-size:13.5px;color:#1d1d1d;transform:scaleX(0.9963)">did:plc:gzgnxobpj5or3zvmmymi2ybk</span>
<span class="t" style="left:926.73px;top:204.17px;font-size:13.5px;color:#1d1d1d;transform:scaleX(1.0005)">bob.test</span>
<span class="t" style="left:1049.75px;top:204.17px;font-size:13.5px;color:#1d1d1d;transform:scaleX(0.9561)">2024-05-24T15:26:08.679Z</span>
<span class="t" style="left:1221.26px;top:204.17px;font-size:13.5px;color:#bbbbbb;transform:scaleX(0.9724)">[NULL]</span>
<span class="t" style="left:653.01px;top:225.77px;font-size:13.5px;color:#1d1d1d;transform:scaleX(0.9500)">4</span>
<span class="t" style="left:697.43px;top:224.67px;font-size:13.5px;color:#1d1d1d;transform:scaleX(1.0134)">did:plc:jrdbpql5vlwl62xmf44ofmr7</span>
<span class="t" style="left:926.69px;top:224.67px;font-size:13.5px;color:#1d1d1d;transform:scaleX(1.0101)">mod.test</span>
<span class="t" style="left:1049.76px;top:224.67px;font-size:13.5px;color:#1d1d1d;transform:scaleX(0.9493)">2024-05-24T15:26:08.913Z</span>
<span class="t" style="left:1221.26px;top:224.67px;font-size:13.5px;color:#bbbbbb;transform:scaleX(0.9724)">[NULL]</span>
<span class="t" style="left:652.79px;top:246.27px;font-size:13.5px;color:#1d1d1d;transform:scaleX(0.9500)">5</span>
<span class="t" style="left:697.45px;top:245.17px;font-size:13.5px;color:#1d1d1d;transform:scaleX(0.9698)">did:plc:gjnpkese2sz6g5zc4p32k4cd</span>
<span class="t" style="left:927.40px;top:245.17px;font-size:13.5px;color:#1d1d1d;transform:scaleX(0.9783)">triage.test</span>
<span class="t" style="left:1049.75px;top:245.17px;font-size:13.5px;color:#1d1d1d;transform:scaleX(0.9646)">2024-05-24T15:26:08.855Z</span>
<span class="t" style="left:1221.26px;top:245.17px;font-size:13.5px;color:#bbbbbb;transform:scaleX(0.9724)">[NULL]</span>
<span class="t" style="left:652.65px;top:266.77px;font-size:13.5px;color:#1d1d1d;transform:scaleX(0.9500)">6</span>
<span class="t" style="left:697.44px;top:265.67px;font-size:13.5px;color:#1d1d1d;transform:scaleX(0.9918)">did:plc:rfeq7ro6wqz627vr3pyirpa4</span>
<span class="t" style="left:927.02px;top:265.67px;font-size:13.5px;color:#1d1d1d;transform:scaleX(1.0100)">admin-mod.test</span>
<span class="t" style="left:1049.76px;top:265.67px;font-size:13.5px;color:#1d1d1d;transform:scaleX(0.9493)">2024-05-24T15:26:08.972Z</span>
<span class="t" style="left:1221.26px;top:265.67px;font-size:13.5px;color:#bbbbbb;transform:scaleX(0.9724)">[NULL]</span>
<span class="t" style="left:652.64px;top:287.27px;font-size:13.5px;color:#1d1d1d;transform:scaleX(0.9500)">7</span>
<span class="t" style="left:697.44px;top:286.17px;font-size:13.5px;color:#1d1d1d;transform:scaleX(0.9857)">did:plc:hvt432s73w34gzz4fk56zyvn</span>
<span class="t" style="left:926.67px;top:286.17px;font-size:13.5px;color:#1d1d1d;transform:scaleX(1.0335)">mod-authority.test</span>
<span class="t" style="left:1049.75px;top:286.17px;font-size:13.5px;color:#1d1d1d;transform:scaleX(0.9646)">2024-05-24T15:26:08.435Z</span>
<span class="t" style="left:1221.26px;top:286.17px;font-size:13.5px;color:#bbbbbb;transform:scaleX(0.9724)">[NULL]</span>
<span class="t" style="left:652.74px;top:307.77px;font-size:13.5px;color:#1d1d1d;transform:scaleX(0.9500)">8</span>
<span class="t" style="left:697.45px;top:306.67px;font-size:13.5px;color:#1d1d1d;transform:scaleX(0.9779)">did:plc:5a254mkfveqoxreddx2c6c4r</span>
<span class="t" style="left:926.71px;top:306.67px;font-size:13.5px;color:#1d1d1d;transform:scaleX(0.9800)">labeler.test</span>
<span class="t" style="left:1049.76px;top:306.67px;font-size:13.5px;color:#1d1d1d;transform:scaleX(0.9438)">2024-05-24T15:26:13.492Z</span>
<span class="t" style="left:1221.26px;top:306.67px;font-size:13.5px;color:#bbbbbb;transform:scaleX(0.9724)">[NULL]</span>
<span class="t" style="left:32.25px;top:26.26px;font-size:16px;color:#3b3e40;transform:scaleX(0.9545)">Navegador de Bases de Datos</span>
<span class="t" style="left:292.28px;top:26.26px;font-size:16px;color:#3b3e40;transform:scaleX(1.0022)">Proyectos</span>
<span class="t" style="left:22.06px;top:93.66px;font-size:16px;color:#858788;transform:scaleX(0.9743)">Ingrese parte del nombre de un objeto aquí</span>
<span class="t" style="left:648.70px;top:25.56px;font-size:16px;color:#3b3e40;transform:scaleX(1.0279)">actor</span>
<span class="t" style="left:648.10px;top:61.96px;font-size:16px;color:#3b3e40;transform:scaleX(0.9937)">Propiedades</span>
<span class="t" style="left:767.21px;top:61.96px;font-size:16px;color:#3b3e40;transform:scaleX(0.9848)">Datos</span>
<span class="t" style="left:838.22px;top:61.96px;font-size:16px;color:#3b3e40;transform:scaleX(0.9768)">Diagrama ER</span>
<span class="t" style="left:1304.96px;top:61.36px;font-size:16px;color:#3b3e40;transform:scaleX(1.0106)">postgres</span>
<span class="t" style="left:1408.35px;top:61.36px;font-size:16px;color:#3b3e40;transform:scaleX(0.9544)">Bases de Datos</span>
<span class="t" style="left:649.11px;top:102.66px;font-size:16px;color:#2ea44f;transform:scaleX(1.0164)">actor</span>
<span class="t" style="left:719.02px;top:101.26px;font-size:16px;color:#bababa;transform:scaleX(0.9708);font-style:italic">Enter a SQL expression to filter results (use Ctrl+Space)</span>
</div></body></html>
